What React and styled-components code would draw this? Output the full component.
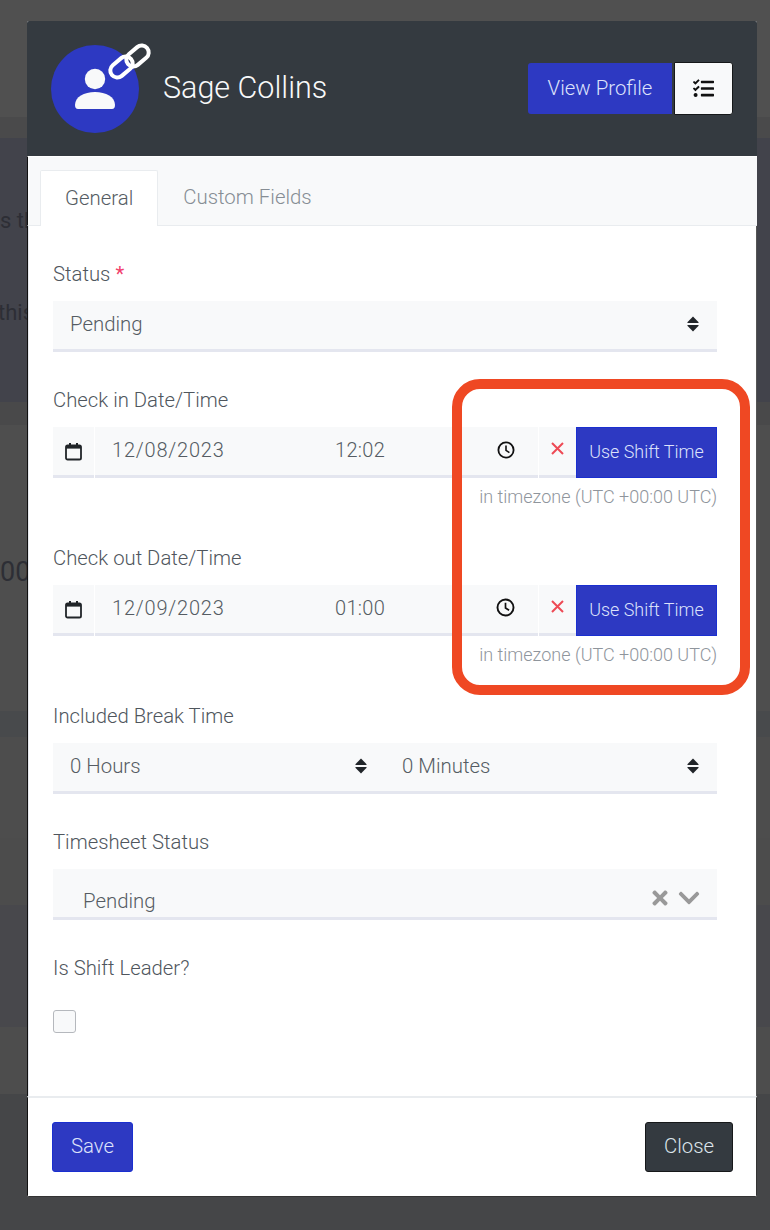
import React from 'react'
import styled, { createGlobalStyle } from 'styled-components'
import { FaChevronDown, FaTasks, FaTimes } from 'react-icons/fa'

const GlobalStyle = createGlobalStyle`
  html, body {
    margin: 0;
    padding: 0;
    background: #454648;
    font-family: Roboto, "Liberation Sans", sans-serif;
  }
  * {
    box-sizing: border-box;
  }
`

const bands = [
  { height: 117, color: '#505050' },
  { height: 21, color: '#4a4a4b' },
  { height: 264, color: '#42434b', lines: [{ text: 's th', gap: 70 }, { text: 'this', gap: 66, shift: -2 }] },
  { height: 23, color: '#49494a' },
  { height: 286, color: '#4e4e4e', lines: [{ text: '00', gap: 134, big: true }] },
  { height: 26, color: '#484a4c' },
  { height: 101, color: '#4d4d4d' },
  { height: 67, color: '#4c4c4c' },
  { height: 122, color: '#48484c' },
  { height: 67, color: '#4d4d4d' },
  { height: 136, color: '#454648' },
]

function CalendarIcon() {
  return (
    <svg width="17" height="19" viewBox="0 0 17 19" fill="none">
      <rect x="1" y="3.5" width="15" height="14" rx="1.6" stroke="#212529" strokeWidth="1.8" />
      <rect x="1" y="3" width="15" height="3.6" fill="#212529" />
      <rect x="4" y="1" width="2" height="3" fill="#212529" />
      <rect x="11" y="1" width="2" height="3" fill="#212529" />
    </svg>
  )
}

function ClockIcon({ size }) {
  return (
    <svg width={size} height={size} viewBox="0 0 18 18" fill="none">
      <circle cx="9" cy="9" r="7.6" stroke="#111" strokeWidth="1.8" />
      <path d="M9 4.6V9.4L12.4 11.6" stroke="#111" strokeWidth="1.6" />
    </svg>
  )
}

function SortGlyph() {
  return (
    <svg width="12" height="16" viewBox="0 0 12 16" fill="#212529">
      <path d="M6 0.6L11.6 6.2Q12 7 11 7H1Q0 7 0.4 6.2Z" />
      <path d="M6 15.4L11.6 9.8Q12 9 11 9H1Q0 9 0.4 9.8Z" />
    </svg>
  )
}

function ClearGlyph() {
  return (
    <svg width="13" height="13" viewBox="0 0 13 13" fill="none" stroke="#ee4a55" strokeWidth="2">
      <path d="M1 1L12 12M12 1L1 12" />
    </svg>
  )
}

function AvatarIcon() {
  return (
    <svg width="88" height="88" viewBox="0 0 88 88">
      <circle cx="44" cy="44" r="44" fill="#2d39c2" />
      <circle cx="44" cy="34" r="10.2" fill="#f8f9fa" />
      <path d="M24 60C24 52 33 47 44 47C55 47 64 52 64 60Q64 64 61 64H27Q24 64 24 60Z" fill="#f8f9fa" />
      <g fill="none" stroke="#fff" strokeWidth="4">
        <rect x="58" y="15" width="25" height="14" rx="7" transform="rotate(-40 70.5 22)" />
        <rect x="74" y="4" width="25" height="14" rx="7" transform="rotate(-40 86.5 11)" />
      </g>
    </svg>
  )
}

function DateTimeField({ label, date, time, clockSize }) {
  return (
    <DateField>
      <Label>{label}</Label>
      <DateRow>
        <Addon><CalendarIcon /></Addon>
        <DateInput>
          <DateText>{date}</DateText>
          <TimeText>{time}</TimeText>
          <ClockSlot><ClockIcon size={clockSize} /></ClockSlot>
        </DateInput>
        <ClearCell><ClearGlyph /></ClearCell>
        <ShiftButton>Use Shift Time</ShiftButton>
      </DateRow>
      <Help>in timezone (UTC +00:00 UTC)</Help>
    </DateField>
  )
}

export default function App() {
  return (
    <Page>
      <GlobalStyle />
      {bands.map((band, i) => (
        <Band key={i} $height={band.height} $color={band.color}>
          {band.lines && band.lines.map((line) => (
            <BackText key={line.text} $gap={line.gap} $shift={line.shift} $big={line.big}>{line.text}</BackText>
          ))}
        </Band>
      ))}

      <Modal>
        <Header>
          <Avatar><AvatarIcon /></Avatar>
          <Name>Sage Collins</Name>
          <HeaderActions>
            <ProfileButton>View Profile</ProfileButton>
            <TasksButton><FaTasks /></TasksButton>
          </HeaderActions>
        </Header>

        <TabBar>
          <Tab $active>General</Tab>
          <Tab>Custom Fields</Tab>
        </TabBar>

        <Body>
          <Field>
            <Label>Status<Required>*</Required></Label>
            <Select>Pending<SortGlyph /></Select>
          </Field>

          <DateTimeField label="Check in Date/Time" date="12/08/2023" time="12:02" clockSize={18} />
          <DateTimeField label="Check out Date/Time" date="12/09/2023" time="01:00" clockSize={19} />

          <Field>
            <Label>Included Break Time</Label>
            <SelectRow>
              <Select>0 Hours<SortGlyph /></Select>
              <Select>0 Minutes<SortGlyph /></Select>
            </SelectRow>
          </Field>

          <Field>
            <Label>Timesheet Status</Label>
            <MultiSelect>
              <MultiValue>Pending</MultiValue>
              <MultiIcons>
                <FaTimes />
                <FaChevronDown />
              </MultiIcons>
            </MultiSelect>
          </Field>

          <Field>
            <Label>Is Shift Leader?</Label>
            <Checkbox />
          </Field>
        </Body>

        <Footer>
          <SaveButton>Save</SaveButton>
          <CloseButton>Close</CloseButton>
        </Footer>
      </Modal>

      <Highlight />
    </Page>
  )
}

const Page = styled.div`
  position: relative;
  width: 770px;
  height: 1230px;
  overflow: hidden;
`

const Band = styled.div`
  height: ${(p) => p.$height}px;
  background: ${(p) => p.$color};
  overflow: hidden;
`

const BackText = styled.div`
  margin-top: ${(p) => p.$gap}px;
  margin-left: ${(p) => p.$shift || 0}px;
  font-size: ${(p) => (p.$big ? 27 : 22)}px;
  line-height: 26px;
  color: #2d2e35;
`

const Modal = styled.div`
  position: absolute;
  left: 27px;
  top: 21px;
  width: 730px;
  height: 1176px;
  display: flex;
  flex-direction: column;
  background: #fff;
  border-radius: 2px;
  overflow: hidden;
`

const Header = styled.header`
  height: 135px;
  flex-shrink: 0;
  display: flex;
  align-items: center;
  padding: 0 24px;
  background: #343a40;
`

const Avatar = styled.div`
  width: 88px;
  height: 88px;
  flex-shrink: 0;
  margin-top: 1px;
  svg {
    display: block;
    overflow: visible;
  }
`

const Name = styled.h1`
  margin: 0 0 2px 24px;
  font-size: 30.5px;
  font-weight: 300;
  color: #f8f9fa;
`

const HeaderActions = styled.div`
  margin-left: auto;
  display: flex;
  align-items: center;
  gap: 2px;
`

const Button = styled.button`
  height: 50px;
  padding: 0 0 2px;
  border-radius: 3px;
  font-family: inherit;
  font-size: 20.4px;
  font-weight: 300;
`

const ProfileButton = styled(Button)`
  width: 144px;
  height: 51px;
  border: 0;
  border-radius: 3px 0 0 3px;
  background: #2d39c2;
  color: #dde2fb;
`

const TasksButton = styled(Button)`
  width: 59px;
  height: 53px;
  display: flex;
  align-items: center;
  justify-content: center;
  padding: 0;
  border: 1px solid #16181a;
  border-radius: 0 3px 3px 0;
  background: #f8f9fa;
  color: #111;
  font-size: 21px;
`

const TabBar = styled.nav`
  height: 70px;
  flex-shrink: 0;
  display: flex;
  align-items: flex-end;
  padding-left: 12px;
  background: #f8f9fa;
  border-bottom: 1px solid #e9ecef;
  border-left: 1px solid #111;
  border-top: 1px solid #fff;
`

const Tab = styled.div`
  height: ${(p) => (p.$active ? 56 : 55)}px;
  margin-bottom: ${(p) => (p.$active ? -1 : 0)}px;
  display: flex;
  align-items: center;
  padding: 0 ${(p) => (p.$active ? 24 : 25)}px 2px;
  font-size: 20.4px;
  font-weight: 300;
  color: ${(p) => (p.$active ? '#555c63' : '#868d94')};
  background: ${(p) => (p.$active ? '#fff' : 'transparent')};
  border: ${(p) => (p.$active ? '1px solid #e9ecef' : '0')};
  border-bottom: 0;
  border-radius: 2px 2px 0 0;
`

const Body = styled.main`
  flex: 1;
  padding: 36px 39px 0 25px;
  border-left: 1px solid #111;
  border-right: 1px solid #555;
  box-shadow: inset 1px 0 0 #e6e8ee;
`

const Field = styled.div`
  margin-bottom: 36px;
`

const DateField = styled.div`
  margin-bottom: 39px;
`

const Label = styled.label`
  display: block;
  margin-bottom: 15px;
  font-size: 20.3px;
  font-weight: 300;
  line-height: 24px;
  color: #4f565d;
`

const Required = styled.span`
  margin-left: 5px;
  font-weight: 400;
  color: #f1416c;
`

const Select = styled.div`
  flex: 1;
  height: 51px;
  display: flex;
  align-items: center;
  justify-content: space-between;
  padding: 0 18px 2px 17px;
  font-size: 20.4px;
  font-weight: 300;
  color: #555c63;
  background: #f8f9fa;
  border-bottom: 3px solid #e4e6ef;
`

const SelectRow = styled.div`
  display: flex;
`

const DateRow = styled.div`
  height: 51px;
  display: flex;
`

const Addon = styled.div`
  width: 41px;
  display: flex;
  align-items: center;
  justify-content: center;
  background: #f8f9fa;
  border-bottom: 3px solid #e4e6ef;
`

const DateInput = styled.div`
  flex: 1;
  margin-left: 1px;
  display: flex;
  align-items: center;
  padding: 0 23px 3px 17px;
  font-size: 20px;
  font-weight: 300;
  color: #555c63;
  background: #f8f9fa;
  border-bottom: 3px solid #e4e6ef;
`

const DateText = styled.span`
  width: 223px;
  letter-spacing: 0.8px;
`

const TimeText = styled.span`
  letter-spacing: 0.3px;
`

const ClockSlot = styled.span`
  display: flex;
  margin-left: auto;
`

const ClearCell = styled.div`
  width: 37px;
  margin-left: 1px;
  display: flex;
  align-items: center;
  justify-content: center;
  padding-bottom: 5px;
  background: #f8f9fa;
  border-bottom: 3px solid #e4e6ef;
`

const ShiftButton = styled.button`
  width: 141px;
  padding: 0 0 2px;
  font-family: inherit;
  font-size: 17.9px;
  font-weight: 300;
  color: #dde2fb;
  background: #2d39c2;
  border: 1px solid #1a2fd0;
`

const Help = styled.div`
  margin-top: 9px;
  font-size: 18px;
  font-weight: 300;
  line-height: 20px;
  text-align: right;
  color: #8f959c;
`

const MultiSelect = styled.div`
  height: 51px;
  display: flex;
  justify-content: space-between;
  padding: 0 16px 0 30px;
  background: #f8f9fa;
  border-bottom: 3px solid #e4e6ef;
`

const MultiValue = styled.span`
  margin-top: 20px;
  font-size: 20.4px;
  font-weight: 300;
  line-height: 24px;
  color: #555c63;
`

const MultiIcons = styled.span`
  margin-top: 17px;
  height: 24px;
  display: flex;
  align-items: center;
  gap: 6px;
  color: #999;
  svg:first-child {
    font-size: 22px;
  }
  svg:last-child {
    font-size: 24px;
  }
`

const Checkbox = styled.div`
  width: 23px;
  height: 23px;
  margin-top: 30px;
  background: #f8f9fa;
  border: 1px solid #b5b8bd;
  border-radius: 3px;
`

const Footer = styled.footer`
  height: 101px;
  flex-shrink: 0;
  display: flex;
  align-items: center;
  justify-content: space-between;
  padding: 0 23px 0 24px;
  border: 1px solid #333;
  border-top: 2px solid #e9ecef;
  border-left-color: #111;
`

const SaveButton = styled(Button)`
  width: 81px;
  color: #dde2fb;
  background: #2d39c2;
  border: 1px solid #1a2fd0;
`

const CloseButton = styled(Button)`
  width: 88px;
  color: #dde5ec;
  background: #343a40;
  border: 1px solid #16181a;
`

const Highlight = styled.div`
  position: absolute;
  left: 452px;
  top: 379px;
  width: 298px;
  height: 316px;
  border: 10px solid #ef4823;
  border-radius: 28px;
  pointer-events: none;
`
